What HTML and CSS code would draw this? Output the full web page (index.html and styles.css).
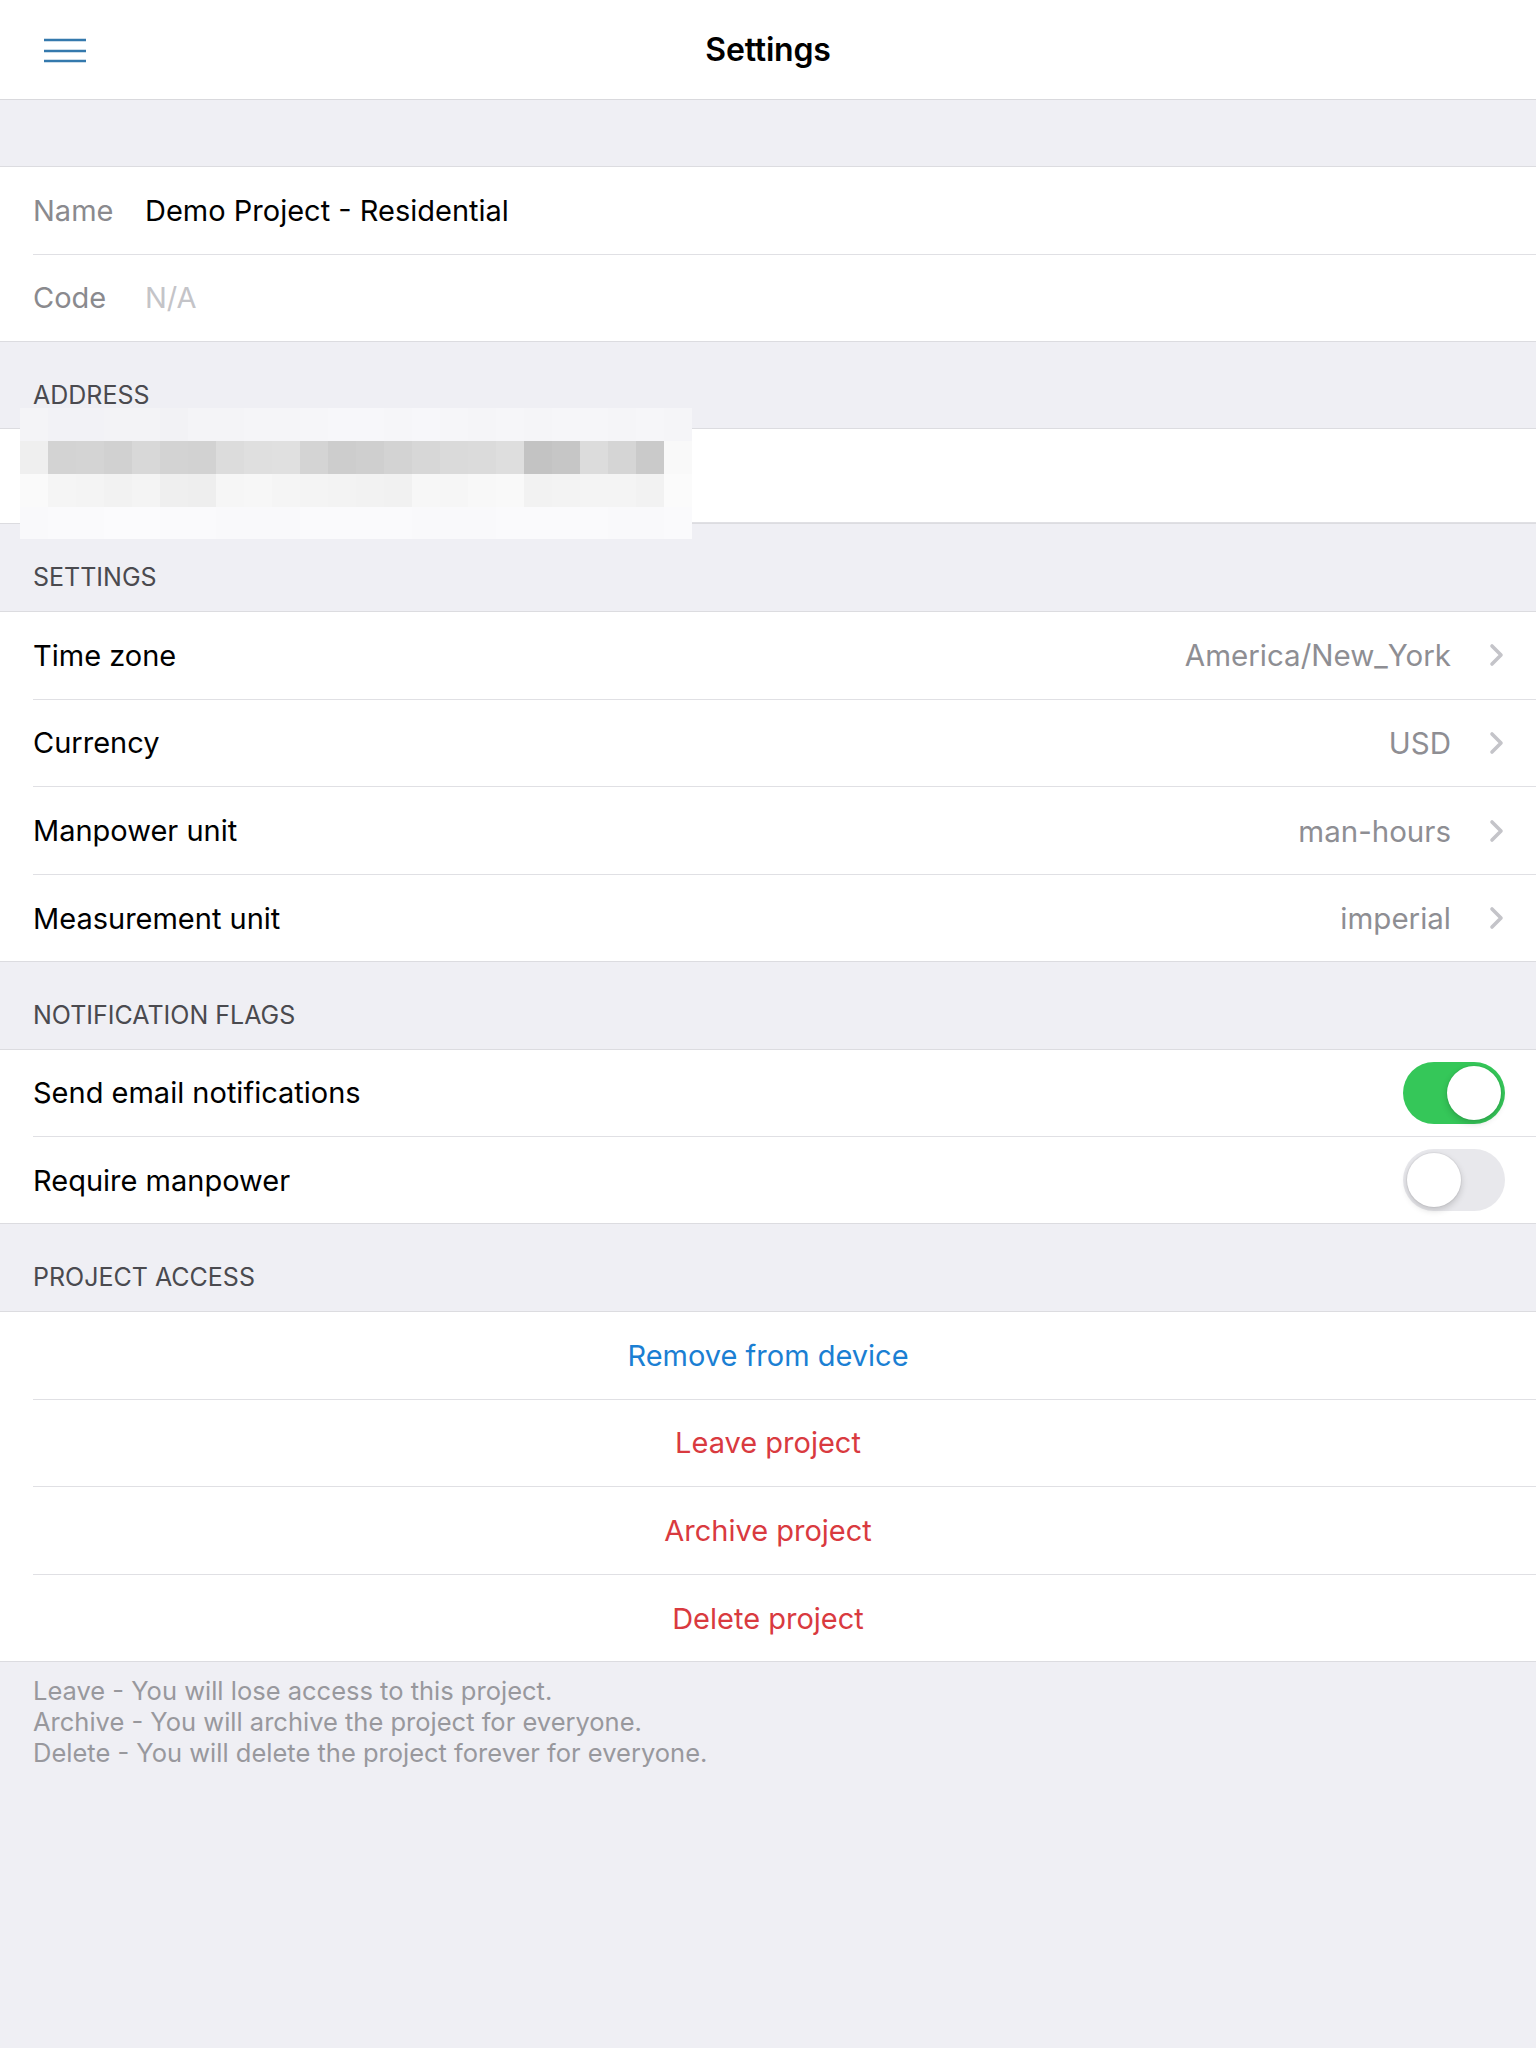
FILE: index.html
```html
<!DOCTYPE html>
<html lang="en">
<head>
    <meta charset="UTF-8">
    <meta name="viewport" content="width=device-width, initial-scale=1.0">
    <title>Settings</title>
    <link rel="stylesheet" href="styles.css">
</head>
<body>
    <header class="navbar">
        <button class="menu-btn" aria-label="Menu">
            <svg width="42" height="26" viewBox="0 0 42 26">
                <path d="M0 2h42M0 13h42M0 23h42" stroke="#3479ad" stroke-width="2.4" fill="none"/>
            </svg>
        </button>
        <h1 class="navbar-title">Settings</h1>
        <div></div>
    </header>

    <main class="settings">
        <div class="spacer"></div>

        <section class="group">
            <div class="cell">
                <div class="cell-body">
                    <span class="field-label">Name</span>
                    <span class="field-value">Demo Project - Residential</span>
                </div>
            </div>
            <div class="cell">
                <div class="cell-body">
                    <span class="field-label">Code</span>
                    <span class="field-value placeholder">N/A</span>
                </div>
            </div>
        </section>

        <h2 class="section-title">Address</h2>
        <section class="group group-address">
            <div class="cell cell-tall">
                <div class="cell-body"></div>
            </div>
            <!-- blurred address -->
            <div class="mosaic">
                <div class="mosaic-row r1"></div>
                <div class="mosaic-row r2"></div>
                <div class="mosaic-row r3"></div>
                <div class="mosaic-row r4"></div>
            </div>
        </section>

        <h2 class="section-title">Settings</h2>
        <section class="group">
            <div class="cell">
                <div class="cell-body">
                    <span class="cell-title">Time zone</span>
                    <span class="cell-detail">America/New_York</span>
                    <svg class="chevron" width="15" height="24" viewBox="0 0 15 24"><path d="M3 3l9 9-9 9"/></svg>
                </div>
            </div>
            <div class="cell">
                <div class="cell-body">
                    <span class="cell-title">Currency</span>
                    <span class="cell-detail">USD</span>
                    <svg class="chevron" width="15" height="24" viewBox="0 0 15 24"><path d="M3 3l9 9-9 9"/></svg>
                </div>
            </div>
            <div class="cell">
                <div class="cell-body">
                    <span class="cell-title">Manpower unit</span>
                    <span class="cell-detail">man-hours</span>
                    <svg class="chevron" width="15" height="24" viewBox="0 0 15 24"><path d="M3 3l9 9-9 9"/></svg>
                </div>
            </div>
            <div class="cell">
                <div class="cell-body">
                    <span class="cell-title">Measurement unit</span>
                    <span class="cell-detail">imperial</span>
                    <svg class="chevron" width="15" height="24" viewBox="0 0 15 24"><path d="M3 3l9 9-9 9"/></svg>
                </div>
            </div>
        </section>

        <h2 class="section-title">Notification flags</h2>
        <section class="group">
            <div class="cell">
                <div class="cell-body">
                    <span class="cell-title">Send email notifications</span>
                    <span class="switch on"><span class="knob"></span></span>
                </div>
            </div>
            <div class="cell">
                <div class="cell-body">
                    <span class="cell-title">Require manpower</span>
                    <span class="switch"><span class="knob"></span></span>
                </div>
            </div>
        </section>

        <h2 class="section-title">Project access</h2>
        <section class="group">
            <div class="cell">
                <div class="cell-body action blue">Remove from device</div>
            </div>
            <div class="cell">
                <div class="cell-body action red">Leave project</div>
            </div>
            <div class="cell">
                <div class="cell-body action red">Archive project</div>
            </div>
            <div class="cell">
                <div class="cell-body action red">Delete project</div>
            </div>
        </section>

        <p class="footnote">
            Leave - You will lose access to this project.<br>
            Archive - You will archive the project for everyone.<br>
            Delete - You will delete the project forever for everyone.
        </p>
    </main>
</body>
</html>
```

FILE: styles.css
```css
* {
    margin: 0;
    padding: 0;
    box-sizing: border-box;
}

body {
    font-family: Inter, "Liberation Sans", sans-serif;
    font-size: 29px;
    color: #000;
    background-color: #efeff4;
    min-height: 2048px;
}

.navbar {
    height: 100px;
    background-color: white;
    border-bottom: 1px solid #d9d9dd;
    display: grid;
    grid-template-columns: 1fr auto 1fr;
    align-items: center;
}

.menu-btn {
    border: none;
    background: none;
    justify-self: start;
    margin-left: 44px;
    margin-top: 2px;
    display: flex;
}

.navbar-title {
    font-size: 32px;
    font-weight: 600;
    letter-spacing: -0.2px;
}

.spacer {
    height: 66px;
}

.group {
    background-color: white;
    border-top: 1px solid #dcdce0;
    border-bottom: 1px solid #dcdce0;
    position: relative;
}

.cell {
    padding-left: 33px;
}

.cell-body {
    height: 87.75px;
    display: flex;
    align-items: center;
    padding-right: 33px;
    border-bottom: 1px solid #e0e0e4;
}

.cell:last-child .cell-body {
    border-bottom: none;
    height: 86px;
}

.cell-tall .cell-body {
    height: 94px;
}

.cell:last-child.cell-tall .cell-body {
    height: 94px;
}

.field-label {
    width: 112px;
    color: #8a8a8e;
}

.field-value.placeholder {
    color: #c4c4c8;
}

.cell-title {
    flex: 1;
}

.cell-detail {
    color: #8e8e93;
    margin-right: 38px;
    font-size: 29.5px;
}

.chevron {
    margin-right: -1px;
}

.chevron path {
    fill: none;
    stroke: #c4c4c9;
    stroke-width: 3.6;
    stroke-linecap: round;
    stroke-linejoin: round;
}

.switch {
    width: 102px;
    height: 62px;
    border-radius: 31px;
    background-color: #e8e8ec;
    padding: 4px;
    display: flex;
    margin-right: -2px;
}

.switch.on {
    background-color: #35c759;
    justify-content: flex-end;
}

.knob {
    width: 54px;
    height: 54px;
    border-radius: 50%;
    background-color: white;
    box-shadow: 0 3px 7px rgba(0, 0, 0, 0.18), 0 0 0 1px rgba(0, 0, 0, 0.04);
}

.action {
    justify-content: center;
}

.action.blue {
    color: #1b7fd3;
}

.action.red {
    color: #d93a3f;
}

.section-title {
    height: 86.5px;
    padding: 37px 0 0 33px;
    font-size: 25px;
    font-weight: 400;
    line-height: 32px;
    text-transform: uppercase;
    color: #4a4a4f;
}

.mosaic {
    position: absolute;
    left: 20px;
    top: -21px;
    width: 672px;
    display: grid;
    grid-template-rows: repeat(4, 32.75px);
}

.mosaic-row.r1 {
    background: linear-gradient(to right, #f4f4f7 0 28px, #f2f2f6 28px 56px, #f2f2f6 56px 84px, #f3f3f6 84px 112px, #f3f3f6 112px 140px, #f2f2f5 140px 168px, #f4f4f7 168px 196px, #f4f4f7 196px 224px, #f5f5f8 224px 252px, #f5f5f8 252px 280px, #f6f6f9 280px 308px, #f7f7fa 308px 336px, #f7f7fa 336px 364px, #f6f6f9 364px 392px, #f7f7fa 392px 420px, #f6f6f9 420px 448px, #f5f5f8 448px 476px, #f6f6f9 476px 504px, #f5f5f8 504px 532px, #f6f6f9 532px 560px, #f6f6f9 560px 588px, #f5f5f8 588px 616px, #f6f6f9 616px 644px, #f5f5f8 644px 672px);
}

.mosaic-row.r2 {
    background: linear-gradient(to right, #efefef 0 28px, #d3d3d3 28px 56px, #d4d4d4 56px 84px, #d1d1d1 84px 112px, #d8d8d8 112px 140px, #d3d3d3 140px 168px, #d2d2d2 168px 196px, #dcdcdc 196px 224px, #dfdfdf 224px 252px, #e0e0e0 252px 280px, #d4d4d4 280px 308px, #cdcdcd 308px 336px, #cfcfcf 336px 364px, #d3d3d3 364px 392px, #d7d7d7 392px 420px, #dadada 420px 448px, #dbdbdb 448px 476px, #dedede 476px 504px, #c3c3c3 504px 532px, #c6c6c6 532px 560px, #dcdcdc 560px 588px, #d5d5d5 588px 616px, #cacaca 616px 644px, #f9f9f9 644px 672px);
}

.mosaic-row.r3 {
    background: linear-gradient(to right, #fafafa 0 28px, #f5f5f5 28px 56px, #f4f4f4 56px 84px, #f2f2f2 84px 112px, #f4f4f4 112px 140px, #efefef 140px 168px, #eeeeee 168px 196px, #f6f6f6 196px 224px, #f7f7f7 224px 252px, #f5f5f5 252px 280px, #f4f4f4 280px 308px, #f3f3f3 308px 336px, #f2f2f2 336px 364px, #f1f1f1 364px 392px, #f7f7f7 392px 420px, #f6f6f6 420px 448px, #f8f8f8 448px 476px, #f9f9f9 476px 504px, #f2f2f2 504px 532px, #f3f3f3 532px 560px, #f4f4f4 560px 588px, #f4f4f4 588px 616px, #f2f2f2 616px 644px, #fbfbfb 644px 672px);
}

.mosaic-row.r4 {
    background: linear-gradient(to right, #f9f9fb 0 28px, #fafafc 28px 84px, #fbfbfd 84px 140px, #fafafc 140px 196px, #f9f9fb 196px 280px, #fafafc 280px 392px, #f9f9fb 392px 476px, #fafafc 476px 588px, #f9f9fb 588px 644px, #fafafc 644px 672px);
}

.footnote {
    padding: 13px 33px;
    font-size: 25.5px;
    font-weight: 400;
    line-height: 31px;
    color: #98989d;
}
```
